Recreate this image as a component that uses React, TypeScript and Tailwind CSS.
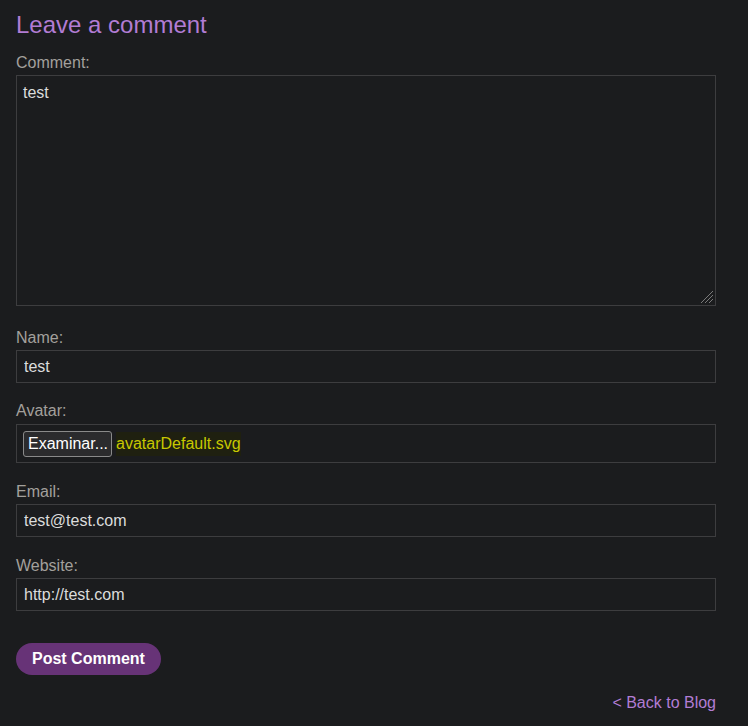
import React from "react";

export default function App() {
  const label = "block text-[16px] leading-[18px] text-[#a3a09c]";
  const input =
    "block w-[700px] h-[33px] border border-[#3d3d3f] bg-[#1b1c1e] px-[7px] text-[16px] text-[#dcdcdc] outline-none";
  return (
    <div
      className="min-h-[726px] w-[748px] bg-[#1b1c1e] px-[16px] pt-[11px]"
      style={{ fontFamily: '"Liberation Sans", Arial, sans-serif' }}
    >
      <h2 className="text-[24px] leading-[28px] text-[#b27cd4]">Leave a comment</h2>
      <label className={label + " mt-[15px]"}>Comment:</label>
      <div className="relative mt-[3px] w-[700px]">
        <textarea
          className="block h-[231px] w-[700px] resize-none border border-[#3d3d3f] bg-[#1b1c1e] px-[6px] py-[5px] text-[16px] text-[#dcdcdc] outline-none"
          defaultValue="test"
        />
        <svg className="absolute bottom-[2px] right-[2px]" width="14" height="14" viewBox="0 0 14 14">
          <path d="M13 1 L1 13 M13 5 L5 13 M13 9 L9 13" stroke="#7a7a7a" strokeWidth="1" />
        </svg>
      </div>
      <label className={label + " mt-[23px]"}>Name:</label>
      <input className={input + " mt-[3px]"} defaultValue="test" />
      <label className={label + " mt-[19px]"}>Avatar:</label>
      <div className="mt-[4px] flex h-[39px] w-[700px] items-center border border-[#3d3d3f] px-[6px]">
        <span className="flex h-[26px] items-center rounded-[3px] border border-[#8a8a8a] bg-[#2b2b2d] pl-[4px] pr-[3px] text-[16px] text-white">
          Examinar...
        </span>
        <span className="ml-[4px] bg-[#1f2010] text-[16px] text-[#c8c800]">avatarDefault.svg</span>
      </div>
      <label className={label + " mt-[20px]"}>Email:</label>
      <input className={input + " mt-[3px]"} defaultValue="test@test.com" />
      <label className={label + " mt-[20px]"}>Website:</label>
      <input className={input + " mt-[3px]"} defaultValue="http://test.com" />
      <button className="mt-[32px] block h-[32px] rounded-full bg-[#673377] px-[16px] text-[16px] font-bold text-white">
        Post Comment
      </button>
      <div className="mt-[16px] flex w-[700px] justify-end">
        <a className="text-[16px] text-[#b27cd4]">&lt; Back to Blog</a>
      </div>
    </div>
  );
}
